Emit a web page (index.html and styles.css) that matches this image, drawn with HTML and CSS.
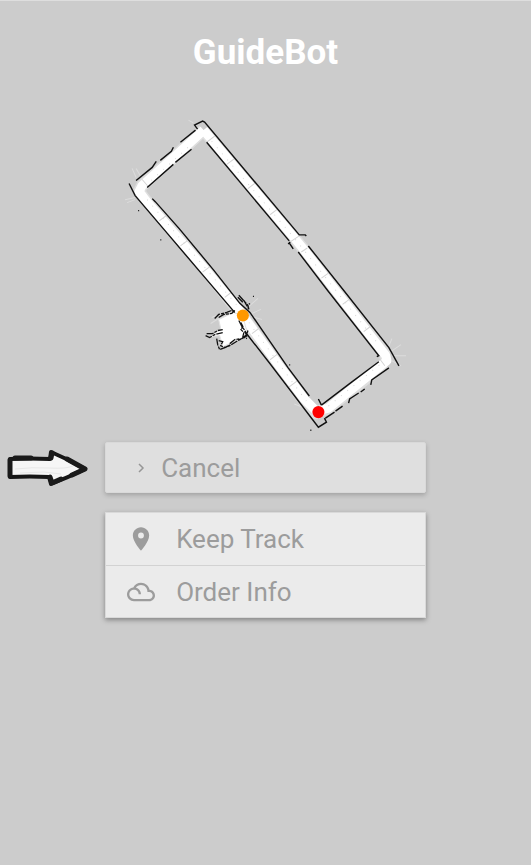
FILE: index.html
```html
<!DOCTYPE html>
<html lang="en">
<head>
<meta charset="utf-8">
<meta name="viewport" content="width=device-width, initial-scale=1">
<title>GuideBot</title>
<link rel="stylesheet" href="styles.css">
</head>
<body>
<main class="page">
  <h1 class="title">GuideBot</h1>
  <svg class="map" viewBox="120 110 290 325" role="img" aria-label="Floor map">
    <!-- scanner haze around the corners -->
    <path class="haze" d="M137 178l-4-9M141 176l-4-7M126 200l10-2M128 203l8-3M194 124l-5-3M387 353l13-9M391 355l14 0M386 350l5-12M391 360l9 5M249 306l9-8M252 313l9-4M251 316l11 3M212 317l10-4M294 403l8 3M211 323l8-5"/>
    <!-- corridor floors -->
    <path class="edge" d="M204 131L294 238 303 249 385 355M384 363L328 407 316 412 304 400 282 370 261 341 240 312 206 270 146 200 140 192 143 186 190 144 204 131"/>
    <path class="floor" d="M204 131L294 238 303 249 385 355 386 360 328 407 316 410 304 398 282 369 261 340 240 311 206 270 146 200 140 192 143 186 190 144 204 131"/>
    <path class="room" d="M219 319l15-7 9 4 4 15-4 6-20 9-3-11-9 1 10-8z"/>
    <!-- seams and scan specks -->
    <path class="seam" d="M207 143l8-6M227 165l8-6M248 189l8-6M270 215l8-6M290 242l9-6M301 252l6-4M321 278l7-5M342 304l8-6M363 331l8-6M143 180l6 7M160 221l8-6M181 246l8-6M203 272l8-6M225 297l8-6M252 333l8-6M270 359l8-6M289 386l8-6M378 357l6 8"/>
    <path class="specks" d="M212 142L294 238 378 344M152 181L192 145M148 200L238 306M249 322L306 400M328 405L380 363"/>
    <!-- walls -->
    <path class="wall" d="M198 130l-3-4 8-4 2 1L299 235h6l1 1M207 143L289 241M289 243l4 6M288 244l2-2M308 246L343 290 388 347 398 365M298 252L327 290 378 355l-2 1M130 184l6 12L165 230 199 270 234 311M153 199l3 3L180 229 214 270 240 303 250 312 270 341 288 367 309 395M245 331L270 363 318 426l8-5-2-4M137 181l16-13 2-3 2-3M161 161l11-9 2-4M181 143l15-12M148 188L174 165M176 163L192 150M321 404L350 382 378 361M318 398l3 6M325 417l9-6M335 410l7-5M348 402l1-4 9-6M360 391l4-3M370 384l1-5 17-12"/>
    <path class="clutter" d="M215 318l4-4 8-2 5-2 3 2M219 317l5-3 8-1 3-3M207 333l6 0 5-3 5-1M206 335l4 2 5-3 8-2M217 338l1 6 2 5 10-4 8-5 8-4 2-6M219 340l4 1-2 4 4 2 6-3M241 322l2 4-2 3 3 3-1 4 4 2M239 320l3 6 3 4 2 6M230 343l5-4 7-1 5-4M238 297l5 5M239 295l9 10 1 4M244 300l5 9M249 303l1 1M253 296l1 0M139 211h1M161 240h1M289 364h1M310 429h1"/>
    <circle class="robot" cx="243" cy="315" r="6"/>
    <circle class="goal" cx="318" cy="411" r="6"/>
  </svg>

  <div class="actions">
    <svg class="pointer" viewBox="0 0 82 38" aria-hidden="true">
      <path class="pointer-body" d="M3 10Q22 9 43 10L44 3Q61 10 78 20Q62 28 44 35L42 28Q23 27 3 28Z"/>
      <path class="pointer-shade" d="M8 20q17-2 34-1t24-2M13 24l24-1 17 2"/>
      <path class="pointer-grit" d="M3 11v16M45 4l-1 5M60 10l18 10-13 6M43 28l2 6 9-4M8 9h16"/>
    </svg>
    <button class="cancel" type="button">
      <svg class="chevron" viewBox="0 0 8 10" aria-hidden="true"><path d="M2 1l4 4-4 4"/></svg>
      <span>Cancel</span>
    </button>
    <nav class="menu" aria-label="Order">
      <button class="item" type="button">
        <svg class="icon" viewBox="0 0 24 24" aria-hidden="true"><path d="M12 2C8.130 2 5 5.130 5 9c0 5.250 7 13 7 13s7-7.750 7-13c0-3.870-3.130-7-7-7zm0 9.500a2.500 2.500 0 1 1 0-5 2.500 2.500 0 0 1 0 5z"/></svg>
        <span>Keep Track</span>
      </button>
      <button class="item" type="button">
        <svg class="icon" viewBox="0 0 24 24" aria-hidden="true"><path d="M19.350 10.040C18.670 6.590 15.640 4 12 4 9.110 4 6.610 5.640 5.360 8.040 2.350 8.360 0 10.900 0 14c0 3.310 2.690 6 6 6h13c2.760 0 5-2.240 5-5 0-2.640-2.050-4.780-4.650-4.960zM19 18H6c-2.210 0-4-1.790-4-4s1.790-4 4-4 4 1.790 4 4h2c0-2.760-1.860-5.080-4.400-5.780C8.610 6.880 10.200 6 12 6c3.030 0 5.500 2.470 5.500 5.500v.5H19c1.650 0 3 1.350 3 3s-1.350 3-3 3z"/></svg>
        <span>Order Info</span>
      </button>
    </nav>
  </div>
</main>
</body>
</html>
```
FILE: styles.css
```css
* {
  box-sizing: border-box;
}

body {
  margin: 0;
  min-height: 100vh;
  background: #ccc;
  border-top: 1px solid #dedede;
  font-family: Roboto, sans-serif;
}

.page {
  display: flex;
  flex-direction: column;
}

.title {
  margin: 31px 0 0;
  color: #fff;
  font-size: 35px;
  font-weight: 700;
  line-height: 42px;
  text-align: center;
}

.map {
  width: 55%;
  margin: 35px auto 0;
  fill: none;
}

.haze {
  stroke: #dcdcdc;
  stroke-width: 1;
}

.edge {
  stroke: #dedede;
  stroke-width: 12;
  stroke-linejoin: round;
}

.floor {
  stroke: #fff;
  stroke-width: 9;
  stroke-linejoin: round;
}

.room {
  fill: #fff;
  stroke: #e2e2e2;
}

.seam {
  stroke: #d4d4d4;
}

.specks {
  stroke: #d8d8d8;
  stroke-dasharray: 1 7;
}

.wall {
  stroke: #111;
  stroke-width: 1.4;
}

.clutter {
  stroke: #111;
  stroke-width: 1.3;
  stroke-dasharray: 7 1 3 1;
}

.robot {
  fill: #ff9800;
}

.goal {
  fill: #f00;
}

.actions {
  display: grid;
  grid-template-columns: 20fr 61fr 20fr;
  row-gap: 19px;
  align-items: center;
  margin-top: 6px;
}

.pointer {
  width: 78%;
  justify-self: center;
  margin-right: 10px;
}

.pointer-body {
  fill: #f6f6f6;
  stroke: #161616;
  stroke-width: 4;
  stroke-linejoin: round;
}

.pointer-shade {
  fill: none;
  stroke: #e8e8e8;
}

.pointer-grit {
  fill: none;
  stroke: #1a1a1a;
  stroke-width: 5;
  stroke-linecap: round;
  stroke-linejoin: round;
}

.cancel,
.item {
  display: flex;
  align-items: center;
  width: 100%;
  border: 0;
  color: #9c9c9c;
  font: 400 26px/32px Roboto, sans-serif;
  text-align: left;
}

.cancel {
  gap: 16px;
  height: 51px;
  padding: 0 31px;
  border: 1px solid #d9d9d9;
  border-radius: 2px;
  background: #dfdfdf;
  box-shadow: 0 2px 5px rgba(0, 0, 0, 0.22);
}

.chevron {
  width: 8px;
  height: 10px;
  fill: none;
  stroke: #969696;
  stroke-width: 1.5;
}

.menu {
  grid-column: 2;
  border: 1px solid #d9d9d9;
  background: #ebebeb;
  box-shadow: 0 2px 5px rgba(0, 0, 0, 0.36);
}

.item {
  gap: 21px;
  height: 52px;
  padding: 0 21px;
  background: none;
}

.item + .item {
  border-top: 1px solid #d2d2d2;
}

.icon {
  width: 28px;
  height: 28px;
  fill: #9c9c9c;
}
```
